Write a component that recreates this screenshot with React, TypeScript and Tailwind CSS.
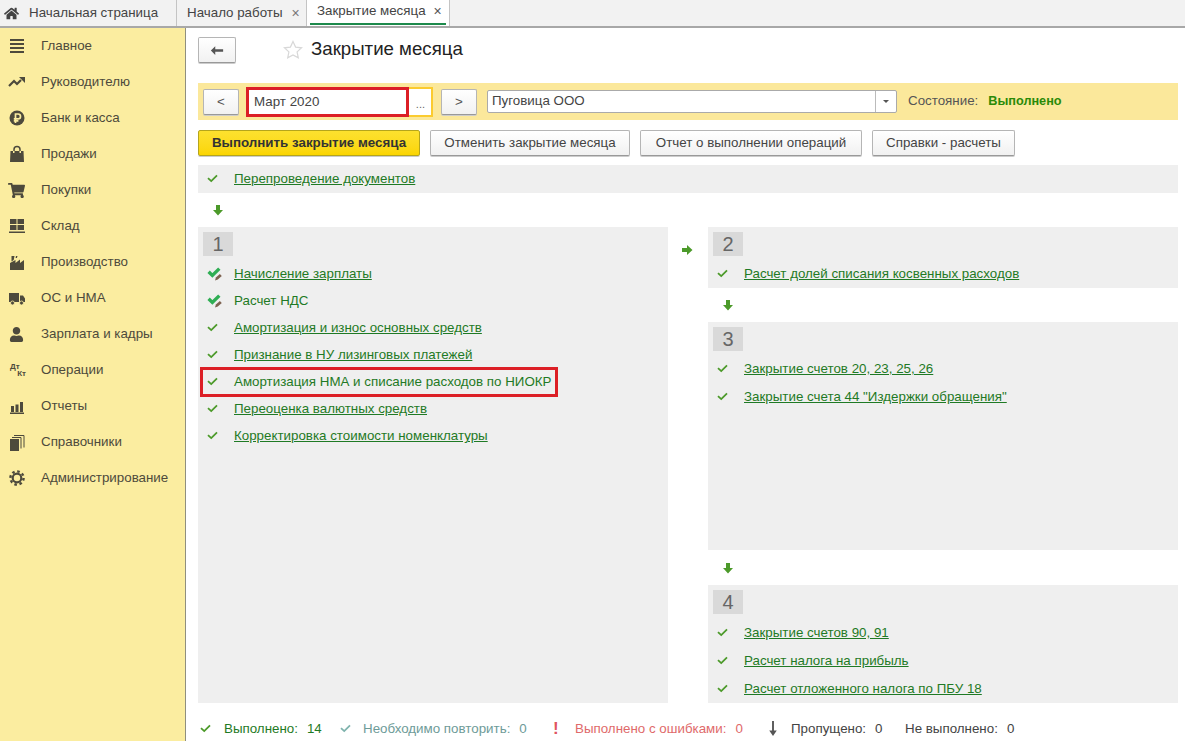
import type { ReactNode } from "react";
import { FaHome, FaShoppingCart, FaUser } from "react-icons/fa";

function Ico({ children }: { children: ReactNode }) {
  return (
    <svg viewBox="0 0 18 18" className="w-[18px] h-[18px] text-[#4d4a3c]" fill="currentColor">
      {children}
    </svg>
  );
}

const menu: { label: string; icon: ReactNode }[] = [
  {
    label: "Главное",
    icon: (
      <Ico>
        <path d="M2 2h14v2H2zM2 6h14v2H2zM2 10h14v2H2zM2 14h14v2H2z" />
      </Ico>
    ),
  },
  {
    label: "Руководителю",
    icon: (
      <Ico>
        <path d="M1 13l5-5 3 3 4-4" fill="none" stroke="currentColor" strokeWidth="2.2" />
        <path d="M11 4h6v6z" />
      </Ico>
    ),
  },
  {
    label: "Банк и касса",
    icon: (
      <Ico>
        <circle cx="9" cy="9" r="7.5" />
        <path
          d="M7.5 14V5h2.6a2.3 2.3 0 010 4.8H5.8M5.8 11.8h4.6"
          fill="none"
          stroke="#fbeda0"
          strokeWidth="1.7"
        />
      </Ico>
    ),
  },
  {
    label: "Продажи",
    icon: (
      <Ico>
        <path d="M2.500 6h2.500v2h1.500V6h5v2H13V6h2.500L16 17H2z" />
        <path d="M6 6V4.500a3 3 0 016 0V6" fill="none" stroke="currentColor" strokeWidth="1.500" />
      </Ico>
    ),
  },
  { label: "Покупки", icon: <FaShoppingCart className="w-[17px] h-[17px] text-[#4d4a3c]" /> },
  {
    label: "Склад",
    icon: (
      <Ico>
        <path d="M2 2h6.500v5H2zM9.500 2H16v5H9.500zM2 8h6.500v5H2zM9.500 8H16v5H9.500zM1 14.500h16V16H1z" />
      </Ico>
    ),
  },
  {
    label: "Производство",
    icon: (
      <Ico>
        <path d="M3.500 3h3l-.8 4-2.200 1.500zM8 3h1.500l-.6 2H7.600z" />
        <path d="M2 10l5.500-3v3l4.500-3.500v3.500l4-3v10H2z" />
      </Ico>
    ),
  },
  {
    label: "ОС и НМА",
    icon: (
      <Ico>
        <path d="M1 4h10v9H1zM12 6.500h3l2 3V13h-5z" />
        <circle cx="4.500" cy="14" r="2" stroke="#fbeda0" strokeWidth="0.8" />
        <circle cx="13.500" cy="14" r="2" stroke="#fbeda0" strokeWidth="0.8" />
      </Ico>
    ),
  },
  { label: "Зарплата и кадры", icon: <FaUser className="ml-[1px] w-[15px] h-[15px] text-[#4d4a3c]" /> },
  {
    label: "Операции",
    icon: (
      <div className="w-[18px] h-[18px] pl-[2px] pt-[2px] flex flex-col text-[8px] leading-[7px] font-bold text-[#4d4a3c]">
        <span>Дт</span>
        <span className="self-end">Кт</span>
      </div>
    ),
  },
  {
    label: "Отчеты",
    icon: (
      <Ico>
        <path d="M3 9h3v6H3zM7.500 7.500h3V15h-3zM12 5h3v10h-3zM2 15.500h14V17H2z" />
      </Ico>
    ),
  },
  {
    label: "Справочники",
    icon: (
      <Ico>
        <path d="M2 6h9v12H2z" />
        <path d="M4 4.500h9v11M6 2.500h10v12" fill="none" stroke="currentColor" strokeWidth="1" />
      </Ico>
    ),
  },
  {
    label: "Администрирование",
    icon: (
      <Ico>
        <circle cx="9" cy="9" r="4.300" fill="none" stroke="currentColor" strokeWidth="2.200" />
        <circle cx="9" cy="9" r="6.600" fill="none" stroke="currentColor" strokeWidth="2.400" strokeDasharray="2.600 2.580" />
      </Ico>
    ),
  },
];

function Check({ color = "#4c9a2a" }: { color?: string }) {
  return (
    <svg viewBox="0 0 12 10" className="w-[11px] h-[9px]">
      <path d="M1 4.500l3.600 3.400L11 1.500" fill="none" stroke={color} strokeWidth="2" />
    </svg>
  );
}

function CheckEdit() {
  return (
    <svg viewBox="0 0 14 13" className="w-[15px] h-[14px]">
      <path d="M1.500 4.500l3.500 3.300 6.500-6.300" fill="none" stroke="#2fae54" strokeWidth="3.200" />
      <path d="M7.500 12.500l.8-2.700 3.700-3.300 1.800 1.900-3.700 3.300z" fill="#7d6250" />
    </svg>
  );
}

function ArrowDown() {
  return (
    <svg viewBox="0 0 12 12" className="w-[12px] h-[12px]">
      <path d="M4 1h4v5h3l-5 5.500L1 6h3z" fill="#4c9a2a" />
    </svg>
  );
}

function Row({ text, link = true, edit, boxed, tall }: { text: string; link?: boolean; edit?: boolean; boxed?: boolean; tall?: boolean }) {
  return (
    <div className={`relative flex items-center ${tall ? "h-[28px]" : "h-[27px]"}`}>
      <div className="w-[36px] pl-[9px] flex items-center shrink-0">{edit ? <CheckEdit /> : <Check />}</div>
      <span className={link && !boxed ? "pt-[2px] text-[#1f7a25] underline" : "pt-[2px] text-[#1f7a25]"}>{text}</span>
      {boxed && <div className="absolute left-[2px] top-[-1px] w-[358px] h-[30px] border-[3px] border-[#dc1f26]" />}
    </div>
  );
}

function Block({ n, className, head = "mb-[4px]", children }: { n: number; className: string; head?: string; children: ReactNode }) {
  return (
    <div className={`bg-[#efefef] ${className}`}>
      <div className={`pl-[5px] pt-[5px] ${head}`}>
        <div className="w-[30px] h-[24px] bg-[#d9d9d9] text-[#666] text-[20px] leading-[24px] text-center">{n}</div>
      </div>
      {children}
    </div>
  );
}

function Btn({ children, className = "" }: { children: ReactNode; className?: string }) {
  return (
    <button
      className={`h-[26px] pt-[1px] rounded-[2px] border border-[#b5b5b5] border-b-[#999] bg-gradient-to-b from-white to-[#f1f1f1] text-[#444] shadow-[0_1px_0_#ccc] ${className}`}
    >
      {children}
    </button>
  );
}

function Stat({ icon, label, value, color, className }: { icon?: ReactNode; label: string; value: string; color: string; className: string }) {
  return (
    <div className={`flex items-center shrink-0 ${className}`} style={{ color }}>
      {icon}
      <span>{label}</span>
      <span className="ml-[9px]">{value}</span>
    </div>
  );
}

export default function App() {
  return (
    <div className="w-[1185px] h-[741px] overflow-hidden bg-white flex flex-col text-[13.35px] text-[#333] font-['Liberation_Sans',Arial,sans-serif]">
      {/* Tabs */}
      <div className="h-[28px] shrink-0 flex bg-[#f2f2f2] border-b-2 border-[#a8a8a8] text-[#444]">
        <div className="w-[177px] flex items-center border-r border-[#c4c4c4]">
          <FaHome className="ml-[4px] w-[15px] h-[15px] text-[#444]" />
          <span className="ml-[10px]">Начальная страница</span>
        </div>
        <div className="w-[130px] flex items-center border-r border-[#c4c4c4] pl-[10px]">
          <span>Начало работы</span>
          <span className="ml-[9px] text-[#777] text-[14px]">×</span>
        </div>
        <div className="w-[143px] bg-white border-r border-[#c4c4c4] px-[3px]">
          <div className="h-[25px] flex items-center pl-[7px] border-b-2 border-[#1d8a4c]">
            <span>Закрытие месяца</span>
            <span className="ml-[8px] text-[#555] text-[14px]">×</span>
          </div>
        </div>
      </div>

      <div className="flex flex-1 min-h-0">
        {/* Sidebar */}
        <div className="w-[186px] shrink-0 bg-[#fbeda0] border-r border-[#8f8f7f] text-[#4d4a3c]">
          {menu.map((m) => (
            <div key={m.label} className="h-[36px] flex items-center">
              <div className="w-[41px] pl-[8px] flex items-center shrink-0">{m.icon}</div>
              <span>{m.label}</span>
            </div>
          ))}
        </div>

        {/* Main */}
        <div className="flex-1 min-w-0 pl-[12px] pr-[7px] flex flex-col">
          <div className="h-[55px] shrink-0 pt-[9px] flex items-start">
            <Btn className="w-[38px] h-[25px] flex items-center justify-center">
              <svg viewBox="0 0 16 12" className="w-[14px] h-[11px]">
                <path d="M6 1v3.500h9v3H6V11L1 6z" fill="#555" />
              </svg>
            </Btn>
            <svg viewBox="0 0 20 20" className="ml-[47px] mt-[3px] w-[20px] h-[20px]">
              <path
                d="M10 1.500l2.600 5.600 6 .7-4.500 4.100 1.200 6L10 15l-5.300 2.900 1.200-6L1.400 7.800l6-.7z"
                fill="none"
                stroke="#d8d8d8"
                strokeWidth="1.2"
              />
            </svg>
            <h1 className="ml-[8px] text-[18.67px] leading-[24px] text-[#222]">Закрытие месяца</h1>
          </div>

          {/* Period bar */}
          <div className="h-[37px] shrink-0 bg-[#fbe89b] flex items-center pl-[5px]">
            <Btn className="w-[36px] text-[#555]">&lt;</Btn>
            <div className="relative ml-[7px] w-[187px] h-[30px] bg-white border-2 border-[#fbcb2f] flex items-center">
              <span className="pl-[6px] pt-[1px] text-[#444]">Март 2020</span>
              <span className="absolute right-[6px] top-[7px] text-[#666] text-[11px]">...</span>
              <div className="absolute left-[-2px] top-[-2px] w-[163px] h-[30px] border-[3px] border-[#dc1f26]" />
            </div>
            <Btn className="ml-[8px] w-[36px] text-[#555]">&gt;</Btn>
            <div className="ml-[10px] w-[410px] h-[23px] bg-white border border-[#aaa] rounded-[2px] flex items-center">
              <span className="flex-1 pl-[4px] text-[#444]">Пуговица ООО</span>
              <div className="w-[21px] h-full border-l border-[#bbb] flex items-center justify-center">
                <div className="w-0 h-0 border-x-[3px] border-x-transparent border-t-[3px] border-t-[#555]" />
              </div>
            </div>
            <span className="ml-[11px] text-[#555]">Состояние:</span>
            <span className="ml-[10px] text-[12.7px] font-bold text-[#2a8a08]">Выполнено</span>
          </div>

          {/* Actions */}
          <div className="h-[45px] shrink-0 flex items-center gap-[10px]">
            <button className="w-[222px] h-[26px] pt-[1px] rounded-[2px] border border-[#b5a51c] bg-gradient-to-b from-[#fde12e] to-[#fbd500] text-[#333] font-bold shadow-[0_1px_0_#ccc]">
              Выполнить закрытие месяца
            </button>
            <Btn className="w-[200px]">Отменить закрытие месяца</Btn>
            <Btn className="w-[222px]">Отчет о выполнении операций</Btn>
            <Btn className="w-[143px]">Справки - расчеты</Btn>
          </div>

          <div className="h-[28px] shrink-0 bg-[#efefef]">
            <Row text="Перепроведение документов" />
          </div>

          <div className="h-[34px] shrink-0 pl-[14px] flex items-center">
            <ArrowDown />
          </div>

          {/* Steps */}
          <div className="h-[476px] shrink-0 flex">
            <Block n={1} className="w-[470px]">
              <Row text="Начисление зарплаты" edit />
              <Row text="Расчет НДС" link={false} edit />
              <Row text="Амортизация и износ основных средств" />
              <Row text="Признание в НУ лизинговых платежей" />
              <Row text="Амортизация НМА и списание расходов по НИОКР" boxed />
              <Row text="Переоценка валютных средств" />
              <Row text="Корректировка стоимости номенклатуры" />
            </Block>
            <div className="w-[40px] shrink-0 pt-[17px] pl-[13px]">
              <svg viewBox="0 0 12 12" className="w-[12px] h-[12px]">
                <path d="M1 4h5V1l5.500 5L6 11V8H1z" fill="#4c9a2a" />
              </svg>
            </div>
            <div className="w-[470px] flex flex-col">
              <Block n={2} className="h-[61px]">
                <Row text="Расчет долей списания косвенных расходов" />
              </Block>
              <div className="h-[34px] flex items-center pl-[14px]">
                <ArrowDown />
              </div>
              <Block n={3} className="h-[228px]" head="mb-[3px]">
                <Row tall text="Закрытие счетов 20, 23, 25, 26" />
                <Row tall text={'Закрытие счета 44 "Издержки обращения"'} />
              </Block>
              <div className="h-[35px] flex items-center pl-[14px]">
                <ArrowDown />
              </div>
              <Block n={4} className="h-[118px]">
                <Row tall text="Закрытие счетов 90, 91" />
                <Row tall text="Расчет налога на прибыль" />
                <Row tall text="Расчет отложенного налога по ПБУ 18" />
              </Block>
            </div>
          </div>

          {/* Totals */}
          <div className="flex-1 flex items-center pl-[2px] pt-[13px]">
            <Stat
              label="Выполнено:"
              value="14"
              color="#1f7a25"
              className="w-[140px]"
              icon={
                <span className="w-[24px]">
                  <Check />
                </span>
              }
            />
            <Stat
              label="Необходимо повторить:"
              value="0"
              color="#6e9b98"
              className="w-[213px]"
              icon={
                <span className="w-[23px]">
                  <Check color="#7fb3ad" />
                </span>
              }
            />
            <Stat
              label="Выполнено с ошибками:"
              value="0"
              color="#e06a6a"
              className="w-[215px]"
              icon={<span className="w-[22px] text-[17px] font-bold text-[#e0555f]">!</span>}
            />
            <Stat
              label="Пропущено:"
              value="0"
              color="#444"
              className="w-[137px]"
              icon={
                <svg viewBox="0 0 10 16" className="w-[10px] h-[15px] mr-[13px]">
                  <path d="M4 0h2v10h3l-4 6-4-6h3z" fill="#555" />
                </svg>
              }
            />
            <Stat label="Не выполнено:" value="0" color="#444" className="" />
          </div>
        </div>
      </div>
    </div>
  );
}
